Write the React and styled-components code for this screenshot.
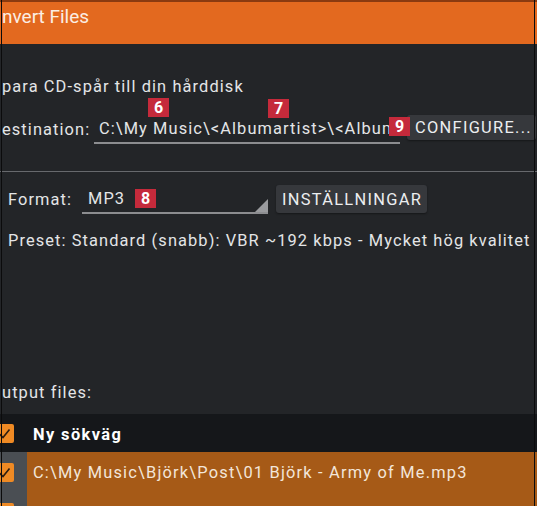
import React from "react";
import styled, { createGlobalStyle } from "styled-components";

const Global = createGlobalStyle`
  html, body { margin: 0; padding: 0; background: #232528; }
  body { font-family: Roboto, "Noto Sans", "Liberation Sans", sans-serif; color: #e4e5e7; }
`;

const Window = styled.div`
  position: relative;
  width: 537px;
  height: 506px;
  overflow: hidden;
  background: #232528;
  display: flex;
  flex-direction: column;
  & > * { flex: none; }
  &::before, &::after {
    content: "";
    position: absolute;
    top: 0;
    bottom: 0;
    width: 1px;
    background: #0b0b0c;
  }
  &::before { left: 1px; }
  &::after { left: 534px; }
`;

const TitleBar = styled.div`
  background: #e3691f;
  border-top: 2px solid #8a3a10;
  padding: 4px 0 0 2px;
  box-sizing: border-box;
  height: 44px;
  font-size: 19px;
  line-height: 22px;
  color: #fbeee4;
`;

const Line = styled.div`
  font-size: 16.4px;
  letter-spacing: 1.1px;
  line-height: 20px;
  white-space: nowrap;
  padding-left: ${(p) => p.$indent || 2}px;
  margin-top: ${(p) => p.$top || 0}px;
`;

const Row = styled.div`
  position: relative;
  display: flex;
  align-items: stretch;
  height: ${(p) => p.$h}px;
  margin-top: ${(p) => p.$top}px;
  padding-left: ${(p) => p.$indent}px;
  font-size: 16.4px;
  letter-spacing: 1.1px;
  white-space: nowrap;
`;

const Label = styled.span`
  width: ${(p) => p.$w}px;
  flex: none;
  align-self: center;
`;

const Field = styled.div`
  width: ${(p) => p.$w}px;
  flex: none;
  box-sizing: border-box;
  border-bottom: 2px solid #8c8d90;
  padding-left: ${(p) => p.$pad}px;
  display: flex;
  align-items: center;
  overflow: hidden;
  position: relative;
`;

const Caret = styled.span`
  position: absolute;
  right: 0;
  bottom: 0;
  width: 0;
  height: 0;
  border-left: 13px solid transparent;
  border-bottom: 13px solid #9a9b9e;
`;

const Button = styled.div`
  flex: none;
  align-self: flex-start;
  box-sizing: border-box;
  width: ${(p) => p.$w}px;
  height: ${(p) => p.$h}px;
  margin-left: ${(p) => p.$ml}px;
  padding-left: ${(p) => p.$px}px;
  background: #36383c;
  border-radius: 3px;
  display: flex;
  align-items: center;
  font-size: 16.4px;
  letter-spacing: 1.3px;
  color: #eceef0;
  box-shadow: 0 1px 2px rgba(0, 0, 0, 0.4);
`;

const Badge = styled.span`
  position: absolute;
  left: ${(p) => p.$x}px;
  top: ${(p) => p.$y}px;
  width: 21px;
  height: 19px;
  background: #c52a3b;
  color: #fff;
  font-weight: 700;
  font-size: 16px;
  letter-spacing: 0;
  line-height: 19px;
  text-align: center;
`;

const Separator = styled.div`
  height: 1px;
  background: #67696d;
  margin-top: ${(p) => p.$top}px;
`;

const Table = styled.div`
  margin-top: 11px;
  display: flex;
  flex-direction: column;
`;

const TableRow = styled.div`
  display: grid;
  grid-template-columns: 27px 1fr;
  height: ${(p) => p.$h}px;
  flex: none;
  background: ${(p) => (p.$head ? "#15171a" : "#a65a17")};
  font-size: 16.4px;
  letter-spacing: ${(p) => (p.$head ? 1.4 : 1.2)}px;
  font-weight: ${(p) => (p.$head ? 700 : 400)};
  color: ${(p) => (p.$head ? "#ffffff" : "#f3e6da")};
`;

const CheckCell = styled.div`
  background: ${(p) => (p.$head ? "#15171a" : "#4a4e53")};
  display: flex;
  align-items: center;
  overflow: hidden;
`;

const Check = styled.div`
  width: 19px;
  height: 19px;
  margin-left: -5px;
  background: #ef8a24;
  border-radius: 2px;
  flex: none;
  display: flex;
  align-items: center;
  justify-content: center;
`;

const TextCell = styled.div`
  display: flex;
  align-items: center;
  padding: ${(p) => (p.$head ? "3px" : "0")} 0 0 6px;
  box-sizing: border-box;
  white-space: nowrap;
`;

const CheckBox = () => (
  <Check>
    <svg width="13" height="13" viewBox="0 0 13 13">
      <path d="M1.5 7 L5 10.5 L11.5 2.5" fill="none" stroke="#2a1c10" strokeWidth="1.6" />
    </svg>
  </Check>
);

export default function App() {
  return (
    <>
      <Global />
      <Window>
        <TitleBar>nvert Files</TitleBar>
        <Line $top={33}>para CD-spår till din hårddisk</Line>
        <Row $h={29} $top={18} $indent={2}>
          <Label $w={92}>estination:</Label>
          <Field $w={306} $pad={5}>C:\My Music\&lt;Albumartist&gt;\&lt;Album&gt;</Field>
          <Button $w={129} $h={25} $ml={7} $px={8}>CONFIGURE...</Button>
          <Badge $x={148} $y={-17}>6</Badge>
          <Badge $x={268} $y={-16}>7</Badge>
          <Badge $x={389} $y={2}>9</Badge>
        </Row>
        <Separator $top={27} />
        <Row $h={29} $top={13} $indent={8}>
          <Label $w={74}>Format:</Label>
          <Field $w={186} $pad={6}>
            MP3
            <Caret />
          </Field>
          <Button $w={151} $h={28} $ml={8} $px={6}>INSTÄLLNINGAR</Button>
          <Badge $x={135} $y={4}>8</Badge>
        </Row>
        <Line $top={17} $indent={8}>Preset: Standard (snabb): VBR ~192 kbps - Mycket hög kvalitet</Line>
        <Line $top={132}>utput files:</Line>
        <Table>
          <TableRow $head $h={38}>
            <CheckCell $head><CheckBox /></CheckCell>
            <TextCell $head>Ny sökväg</TextCell>
          </TableRow>
          <TableRow $h={40}>
            <CheckCell><CheckBox /></CheckCell>
            <TextCell>C:\My Music\Björk\Post\01 Björk - Army of Me.mp3</TextCell>
          </TableRow>
          <TableRow $h={40}>
            <CheckCell><CheckBox /></CheckCell>
            <TextCell>C:\My Music\Björk\Post\02 Björk - Hyper-Ballad.mp3</TextCell>
          </TableRow>
        </Table>
      </Window>
    </>
  );
}
